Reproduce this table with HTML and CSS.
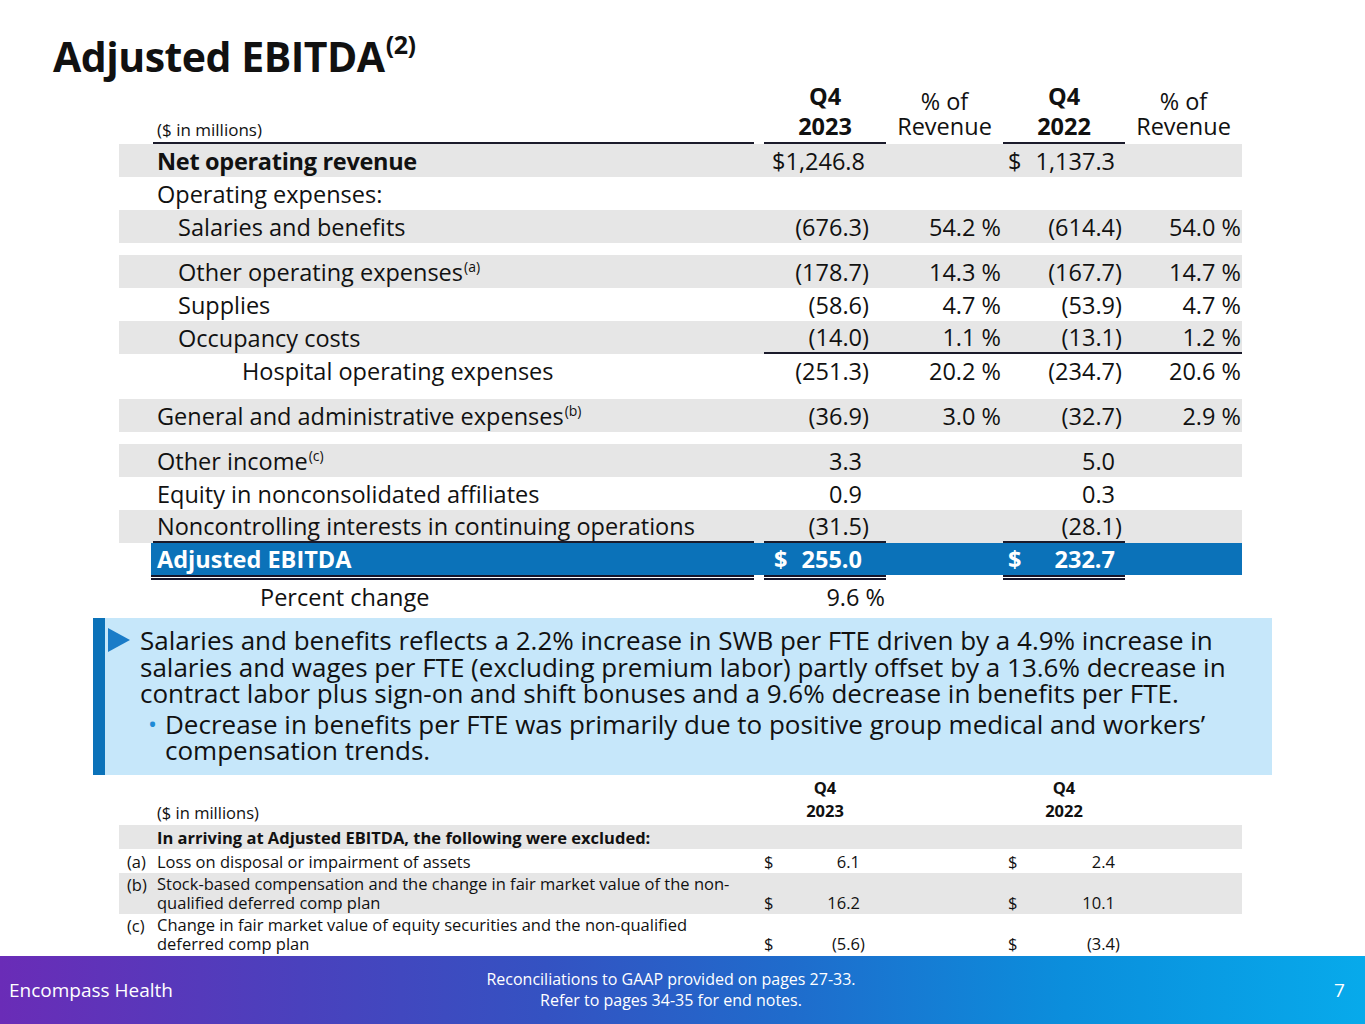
FILE: index.html
```html
<!DOCTYPE html>
<html lang="en">
<head>
<meta charset="utf-8">
<title>Adjusted EBITDA</title>
<link rel="stylesheet" href="styles.css">
</head>
<body>
<div class="page">
  <h1 class="title">Adjusted EBITDA<sup>(2)</sup></h1>

  <div class="tbl">
    <div class="row head">
      <div></div>
      <div class="lbl ul small">($ in millions)</div>
      <div></div>
      <div class="hc ul"><b>Q4</b><b>2023</b></div>
      <div class="hc rev"><span>% of</span><span>Revenue</span></div>
      <div class="hc ul"><b>Q4</b><b>2022</b></div>
      <div class="hc rev"><span>% of</span><span>Revenue</span></div>
    </div>
    <div class="row band">
      <div></div>
      <div class="lbl bold">Net operating revenue</div>
      <div></div>
      <div class="v1 nr">$1,246.8</div>
      <div class="pc"></div>
      <div class="v2 dol d2"><span class="cur">$</span><span>1,137.3</span></div>
      <div class="pc2"></div>
    </div>
    <div class="row">
      <div></div>
      <div class="lbl">Operating expenses:</div>
      <div></div><div></div><div></div><div></div><div></div>
    </div>
    <div class="row band">
      <div></div>
      <div class="lbl i1">Salaries and benefits</div>
      <div></div>
      <div class="v1">(676.3<span class="p">)</span></div>
      <div class="pc">54.2 %</div>
      <div class="v2">(614.4<span class="p">)</span></div>
      <div class="pc2">54.0 %</div>
    </div>
    <div class="gap"></div>
    <div class="row band">
      <div></div>
      <div class="lbl i1">Other operating expenses<sup>(a)</sup></div>
      <div></div>
      <div class="v1">(178.7<span class="p">)</span></div>
      <div class="pc">14.3 %</div>
      <div class="v2">(167.7<span class="p">)</span></div>
      <div class="pc2">14.7 %</div>
    </div>
    <div class="row">
      <div></div>
      <div class="lbl i1">Supplies</div>
      <div></div>
      <div class="v1">(58.6<span class="p">)</span></div>
      <div class="pc">4.7 %</div>
      <div class="v2">(53.9<span class="p">)</span></div>
      <div class="pc2">4.7 %</div>
    </div>
    <div class="row band">
      <div></div>
      <div class="lbl i1">Occupancy costs</div>
      <div></div>
      <div class="v1 ul">(14.0<span class="p">)</span></div>
      <div class="pc ul">1.1 %</div>
      <div class="v2 ul">(13.1<span class="p">)</span></div>
      <div class="pc2 ul">1.2 %</div>
    </div>
    <div class="row">
      <div></div>
      <div class="lbl i2">Hospital operating expenses</div>
      <div></div>
      <div class="v1">(251.3<span class="p">)</span></div>
      <div class="pc">20.2 %</div>
      <div class="v2">(234.7<span class="p">)</span></div>
      <div class="pc2">20.6 %</div>
    </div>
    <div class="gap"></div>
    <div class="row band">
      <div></div>
      <div class="lbl">General and administrative expenses<sup>(b)</sup></div>
      <div></div>
      <div class="v1">(36.9<span class="p">)</span></div>
      <div class="pc">3.0 %</div>
      <div class="v2">(32.7<span class="p">)</span></div>
      <div class="pc2">2.9 %</div>
    </div>
    <div class="gap"></div>
    <div class="row band">
      <div></div>
      <div class="lbl">Other income<sup>(c)</sup></div>
      <div></div>
      <div class="v1">3.3</div>
      <div class="pc"></div>
      <div class="v2">5.0</div>
      <div class="pc2"></div>
    </div>
    <div class="row">
      <div></div>
      <div class="lbl">Equity in nonconsolidated affiliates</div>
      <div></div>
      <div class="v1">0.9</div>
      <div class="pc"></div>
      <div class="v2">0.3</div>
      <div class="pc2"></div>
    </div>
    <div class="row band">
      <div></div>
      <div class="lbl ul">Noncontrolling interests in continuing operations</div>
      <div></div>
      <div class="v1 ul">(31.5<span class="p">)</span></div>
      <div class="pc"></div>
      <div class="v2 ul">(28.1<span class="p">)</span></div>
      <div class="pc2"></div>
    </div>
    <div class="row total">
      <div class="nob"></div>
      <div class="lbl dbl">Adjusted EBITDA</div>
      <div class="sp"></div>
      <div class="v1 dol dbl t1"><span class="cur">$</span><span>255.0</span></div>
      <div class="pc sp"></div>
      <div class="v2 dol dbl d2"><span class="cur">$</span><span>232.7</span></div>
      <div class="pc2 sp"></div>
    </div>
    <div class="row">
      <div></div>
      <div class="lbl i3">Percent change</div>
      <div></div>
      <div class="v1 pchg">9.6 %</div>
      <div></div><div></div><div></div>
    </div>
  </div>

  <div class="callout">
    <div class="bul1">
      <span class="tri"></span>
      <p>Salaries and benefits reflects a 2.2% increase in SWB per FTE driven by a 4.9% increase in salaries and wages per FTE (excluding premium labor) partly offset by a 13.6% decrease in contract labor plus sign-on and shift bonuses and a 9.6% decrease in benefits per FTE.</p>
    </div>
    <div class="bul2">
      <span class="dot">•</span>
      <p>Decrease in benefits per FTE was primarily due to positive group medical and workers’ compensation trends.</p>
    </div>
  </div>

  <div class="tbl2">
    <div class="r2 head2">
      <div></div>
      <div class="lb2">($ in millions)</div>
      <div></div>
      <div class="hc2"><b>Q4</b><b>2023</b></div>
      <div></div>
      <div class="hc2"><b>Q4</b><b>2022</b></div>
      <div></div>
    </div>
    <div class="r2 band excl">
      <div></div>
      <div class="lb2"><b>In arriving at Adjusted EBITDA, the following were excluded:</b></div>
      <div></div><div></div><div></div><div></div><div></div>
    </div>
    <div class="r2 one">
      <div class="key">(a)</div>
      <div class="lb2">Loss on disposal or impairment of assets</div>
      <div></div>
      <div class="w1"><span>$</span><span>6.1</span></div>
      <div></div>
      <div class="w2"><span>$</span><span>2.4</span></div>
      <div></div>
    </div>
    <div class="r2 band two">
      <div class="key">(b)</div>
      <div class="lb2">Stock-based compensation and the change in fair market value of the non-<br>qualified deferred comp plan</div>
      <div></div>
      <div class="w1"><span>$</span><span>16.2</span></div>
      <div></div>
      <div class="w2"><span>$</span><span>10.1</span></div>
      <div></div>
    </div>
    <div class="r2 two">
      <div class="key">(c)</div>
      <div class="lb2">Change in fair market value of equity securities and the non-qualified<br>deferred comp plan</div>
      <div></div>
      <div class="w1"><span>$</span><span>(5.6<span class="p">)</span></span></div>
      <div></div>
      <div class="w2"><span>$</span><span>(3.4<span class="p">)</span></span></div>
      <div></div>
    </div>
  </div>

  <footer class="foot">
    <div class="brand">Encompass Health</div>
    <div class="note">Reconciliations to GAAP provided on pages 27-33.<br>Refer to pages 34-35 for end notes.</div>
    <div class="pg">7</div>
  </footer>
</div>
</body>
</html>
```

FILE: styles.css
```css
* { box-sizing: border-box; }
html, body { margin: 0; padding: 0; }
body {
  width: 1365px;
  height: 1024px;
  overflow: hidden;
  background: #fff;
  color: #111;
  font-family: "Open Sans", "Noto Sans", sans-serif;
}
.page {
  width: 1365px;
  height: 1024px;
  display: flex;
  flex-direction: column;
}
.title {
  margin: 0;
  padding: 29px 0 0 53px;
  height: 80px;
  font-size: 41px;
  font-weight: 700;
  line-height: 54px;
  color: #111;
  letter-spacing: -0.5px;
}
.title sup {
  font-size: 25px;
  vertical-align: 0;
  position: relative;
  top: -18px;
  margin-left: 1px;
}

/* main table */
.tbl {
  margin-left: 119px;
  width: 1123px;
  font-size: 23.5px;
}
.row {
  display: grid;
  grid-template-columns: 34px 601px 10px 122px 117px 122px 117px;
  grid-template-rows: 100%;
  height: 33px;
}
.row > div {
  display: flex;
  align-items: center;
  white-space: nowrap;
}
.band { background: #e6e6e6; }
.bold { font-weight: 700; letter-spacing: -0.3px; }
.gap { height: 12px; }
.lbl { padding-left: 4px; }
.lbl.i1 { padding-left: 25px; }
.lbl.i2 { padding-left: 89px; }
.lbl.i3 { padding-left: 107px; }
.lbl sup {
  font-size: 14px;
  position: relative;
  top: -5px;
  vertical-align: top;
  margin-left: 1px;
}
.v1 { justify-content: flex-end; padding-right: 24px; }
.v1.nr { padding-right: 21px; }
.v2 { justify-content: flex-end; padding-right: 10px; }
.pc { justify-content: flex-end; padding-right: 2px; }
.pc2 { justify-content: flex-end; padding-right: 1px; }
.p { display: inline-block; width: 0; }
.row > .dol { justify-content: space-between; }
.d2 { padding-left: 5px; }
.t1 { padding-left: 6px; }
.row > .t1 { justify-content: flex-end; gap: 14px; }
.pchg { padding-right: 1px; }
.ul { border-bottom: 2px solid #1b1b2b; }

/* header */
.row.head { height: 64px; }
.row.head > div { align-items: flex-end; }
.row.head .small { font-size: 17px; padding-bottom: 1px; }
.hc {
  flex-direction: column;
  justify-content: flex-end;
  align-items: center !important;
  padding-bottom: 1px;
}
.hc b { font-weight: 700; line-height: 30px; }
.hc span { display: block; line-height: 25px; }
.hc.rev { padding-bottom: 5px; }

/* total row */
.row.total { height: 37px; color: #fff; font-weight: 700; }
.row.total > div {
  background: #0b72b9;
  background-clip: padding-box;
  border-bottom: 5px solid transparent;
}
.row.total > .nob { background: transparent; }
.row.total > .dbl { border-bottom: 5px double #15152a; }
.row.total > .lbl { margin-left: -2px; padding-left: 6px; }

/* callout */
.callout {
  margin: 5px 0 0 93px;
  width: 1179px;
  height: 157px;
  background: #c6e7fa;
  border-left: 12px solid #0b72b9;
  padding: 9px 44px 0 3px;
  font-size: 26px;
  line-height: 26.5px;
  color: #111;
}
.callout p { margin: 0; }
.bul1 { display: flex; }
.tri {
  flex: none;
  width: 0;
  height: 0;
  margin: 1px 10px 0 0;
  border-top: 12px solid transparent;
  border-bottom: 12px solid transparent;
  border-left: 22px solid #1a7cc8;
}
.bul2 { display: flex; margin-top: 4px; padding-left: 40px; }
.dot {
  flex: none;
  width: 17px;
  color: #1e8ad6;
  font-size: 24px;
}

/* bottom table */
.tbl2 {
  margin-left: 119px;
  width: 1123px;
  font-size: 16.5px;
  line-height: 19px;
}
.r2 {
  display: grid;
  grid-template-columns: 34px 601px 10px 122px 117px 122px 117px;
}
.r2 > div { display: flex; align-items: flex-end; white-space: nowrap; }
.head2 { height: 50px; padding-bottom: 3px; }
.hc2 {
  flex-direction: column;
  align-items: center !important;
  justify-content: flex-end;
  line-height: 23px;
}
.hc2 b { font-weight: 700; }
.r2 > .lb2 { padding-left: 4px; }
.excl { height: 24px; }
.excl > div { align-items: center; }
.one { height: 24px; }
.one > div { align-items: center; }
.two { height: 41px; padding-bottom: 2px; }
.key { padding-left: 8px; }
.r2 > .key { align-items: flex-start; padding-top: 2px; }
.one > .key { align-items: center; padding-top: 0; }
.w1, .w2 { justify-content: space-between; }
.w1 { padding-right: 26px; }
.w2 { padding-left: 5px; padding-right: 10px; }

/* footer */
.foot {
  margin-top: auto;
  height: 68px;
  display: flex;
  align-items: center;
  justify-content: space-between;
  color: #fff;
  background: linear-gradient(90deg, #6a2cb7 0%, #4a41bd 22%, #3452c2 40%, #1f6ccc 58%, #0b8edc 78%, #07aaeb 100%);
  padding: 0 20px 0 9px;
}
.brand { font-size: 19px; width: 300px; }
.note { font-size: 16px; text-align: center; line-height: 21px; margin-right: 12px; }
.pg { font-size: 19px; width: 300px; text-align: right; }
```
